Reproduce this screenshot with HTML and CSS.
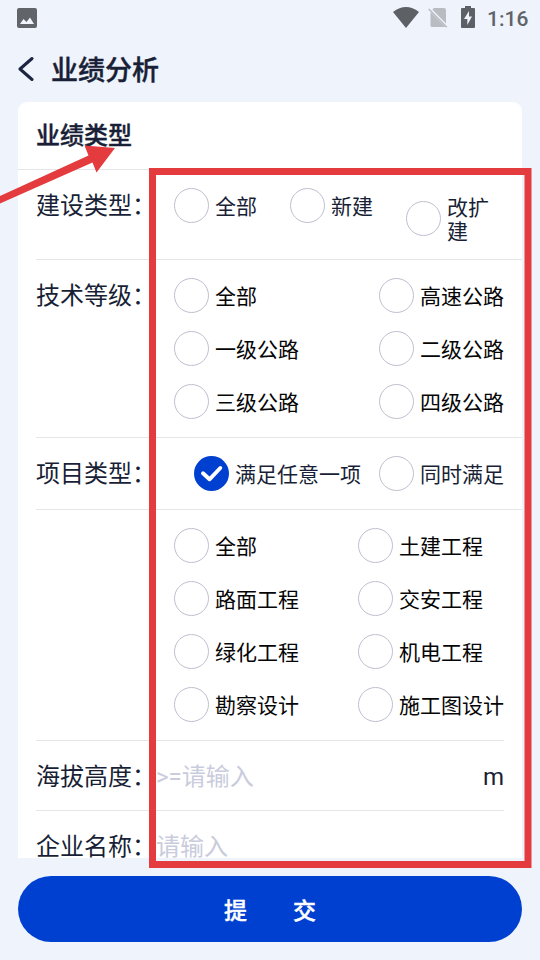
FILE: index.html
```html
<!DOCTYPE html>
<html lang="zh-CN">
<head>
<meta charset="utf-8">
<title>业绩分析</title>
<link rel="stylesheet" href="styles.css">
</head>
<body>
<div class="screen">
  <div class="status">
    <svg class="status-photo" width="20" height="20" viewBox="0 0 20 20"><path fill="#616468" fill-rule="evenodd" d="M2 0H18Q20 0 20 2V18Q20 20 18 20H2Q0 20 0 18V2Q0 0 2 0ZM3 16H17L13 9.5L9.5 14L6.5 11Z"/></svg>
    <svg class="status-wifi" width="26" height="21" viewBox="0 0 26 21"><path fill="#5d6064" d="M0 5Q13-5 26 5L13 21Z"/></svg>
    <svg class="status-sim" width="20" height="20" viewBox="0 0 20 20"><path fill="#b9bcc1" d="M6 0H16Q18 0 18 2V15.500L4.300 1.600ZM2.500 4.200L17.500 19H4Q2.500 19 2.500 17.500Z"/><path d="M.7 1L18.800 19.300" stroke="#b9bcc1" stroke-width="1.600"/></svg>
    <svg class="status-battery" width="14" height="22" viewBox="0 0 14 22"><path fill="#5d6064" d="M4 0H10V2H13Q14 2 14 3V21Q14 22 13 22H1Q0 22 0 21V3Q0 2 1 2H4Z"/><path fill="#eff3fc" d="M8 5L3 13H6.300V19L11 10.500H8Z"/></svg>
    <span class="time">1:16</span>
  </div>
  <header class="nav">
    <svg width="17" height="26" viewBox="0 0 17 26"><path d="M14 2.500L2 13L14 23.500" fill="none" stroke="#1b2440" stroke-width="3" stroke-linecap="round" stroke-linejoin="round"/></svg>
    <h1>业绩分析</h1>
  </header>
  <main class="card">
    <h2>业绩类型</h2>
    <section class="row build">
      <span class="label">建设类型：</span>
      <div class="trio">
        <label class="option"><i class="radio"></i><span>全部</span></label>
        <label class="option"><i class="radio"></i><span>新建</span></label>
        <label class="option wrapped"><i class="radio"></i><span>改扩建</span></label>
      </div>
    </section>
    <section class="row">
      <span class="label">技术等级：</span>
      <div class="options black">
        <label class="option"><i class="radio"></i><span>全部</span></label>
        <label class="option"><i class="radio"></i><span>高速公路</span></label>
        <label class="option"><i class="radio"></i><span>一级公路</span></label>
        <label class="option"><i class="radio"></i><span>二级公路</span></label>
        <label class="option"><i class="radio"></i><span>三级公路</span></label>
        <label class="option"><i class="radio"></i><span>四级公路</span></label>
      </div>
    </section>
    <section class="row">
      <span class="label">项目类型：</span>
      <div class="options match">
        <label class="option"><svg width="35" height="35" viewBox="0 0 35 35"><circle cx="17.500" cy="17.500" r="17.500" fill="#0040d0"/><path d="M9 17.300L15.500 23.300L26.300 12" fill="none" stroke="#fff" stroke-width="3.900" stroke-linecap="round" stroke-linejoin="round"/></svg><span>满足任意一项</span></label>
        <label class="option"><i class="radio"></i><span>同时满足</span></label>
      </div>
    </section>
    <section class="row inset">
      <span class="label"></span>
      <div class="options black">
        <label class="option"><i class="radio"></i><span>全部</span></label>
        <label class="option"><i class="radio"></i><span>土建工程</span></label>
        <label class="option"><i class="radio"></i><span>路面工程</span></label>
        <label class="option"><i class="radio"></i><span>交安工程</span></label>
        <label class="option"><i class="radio"></i><span>绿化工程</span></label>
        <label class="option"><i class="radio"></i><span>机电工程</span></label>
        <label class="option"><i class="radio"></i><span>勘察设计</span></label>
        <label class="option"><i class="radio"></i><span>施工图设计</span></label>
      </div>
    </section>
    <section class="row inset field">
      <span class="label">海拔高度：</span>
      <span class="placeholder">&gt;=请输入</span>
      <span class="unit">m</span>
    </section>
    <section class="row inset field">
      <span class="label">企业名称：</span>
      <span class="placeholder">请输入</span>
    </section>
  </main>
  <button class="submit"><span>提</span><span>交</span></button>
  <svg class="annotation" width="540" height="960" viewBox="0 0 540 960"><rect x="152.500" y="171.500" width="375.500" height="693" fill="none" stroke="#e33b3e" stroke-width="7"/><path fill="#e33b3e" d="M0 196L88.500 155.500L84.500 145.500L115 148L96.500 172.500L92.500 162.500L0 203.500Z"/></svg>
</div>
</body>
</html>
```

FILE: styles.css
```css
* { box-sizing: border-box; }
body { margin: 0; }
.screen {
  position: relative;
  width: 540px;
  height: 960px;
  padding: 0 18px;
  overflow: hidden;
  background: #eff3fc;
  color: #181f36;
  font-family: Roboto, "Noto Sans CJK SC", sans-serif;
}
.status { display: flex; align-items: center; height: 36px; margin-right: -6px; }
.status-photo { margin-left: -1px; }
.status-wifi { margin: -2px 0 0 auto; }
.status-sim { margin-left: 9px; }
.status-battery { margin: -2px 12px 0 13px; }
.time { padding-top: 2px; color: #606368; font-size: 21px; font-weight: 500; line-height: 36px; width: 41px; white-space: nowrap; }
.nav { display: flex; align-items: center; height: 66px; gap: 16px; }
h1, h2 { margin: 0; font-weight: 500; -webkit-text-stroke: 0.4px currentColor; }
h1 { padding-top: 3px; font-size: 27px; line-height: 36px; }
.card {
  height: 756px;
  overflow: hidden;
  background: #fff;
  border-radius: 9px 9px 0 0;
}
h2 {
  height: 68px;
  padding-left: 18px;
  border-bottom: 1px solid #e4e6e9;
  font-size: 24px;
  line-height: 69px;
}
.row {
  display: flex;
  margin-left: 18px;
  padding: 18px 18px 18px 0;
  border-bottom: 1px solid #e4e6e9;
}
.inset { margin-right: 18px; padding-right: 0; }
.label { flex: 0 0 120px; height: 35px; font-size: 24px; line-height: 37px; white-space: nowrap; }
.build { height: 90px; }
.trio { flex: 1; display: flex; align-items: flex-start; gap: 33px; padding-left: 18px; }
.options {
  flex: 1;
  display: grid;
  grid-template-columns: auto auto;
  justify-content: space-between;
  gap: 18px;
  padding-left: 18px;
}
.match { justify-content: end; }
.black { color: #050505; }
.option { display: flex; align-items: center; gap: 6px; font-size: 21px; line-height: 24px; white-space: nowrap; }
.option span { padding-top: 3px; }
.radio { flex: 0 0 35px; height: 35px; border: 1.5px solid #bfbfd0; border-radius: 50%; }
.wrapped { padding-top: 4px; white-space: normal; }
.wrapped span { width: 57px; padding: 4px 12px 0 0; }
.field { height: 70px; padding-top: 18px; padding-bottom: 0; font-size: 24px; line-height: 37px; }
.placeholder { flex: 1; color: #c9ccdc; }
.submit {
  display: flex;
  align-items: center;
  justify-content: center;
  gap: 46px;
  width: 504px;
  height: 66px;
  margin-top: 18px;
  padding: 5px 0 0;
  border: 0;
  border-radius: 33px;
  background: #0040d0;
  color: #fff;
  font: 500 23px/34px Roboto, "Noto Sans CJK SC", sans-serif;
  -webkit-text-stroke: 0.4px currentColor;
}
.annotation { position: absolute; top: 0; left: 0; pointer-events: none; }
```
